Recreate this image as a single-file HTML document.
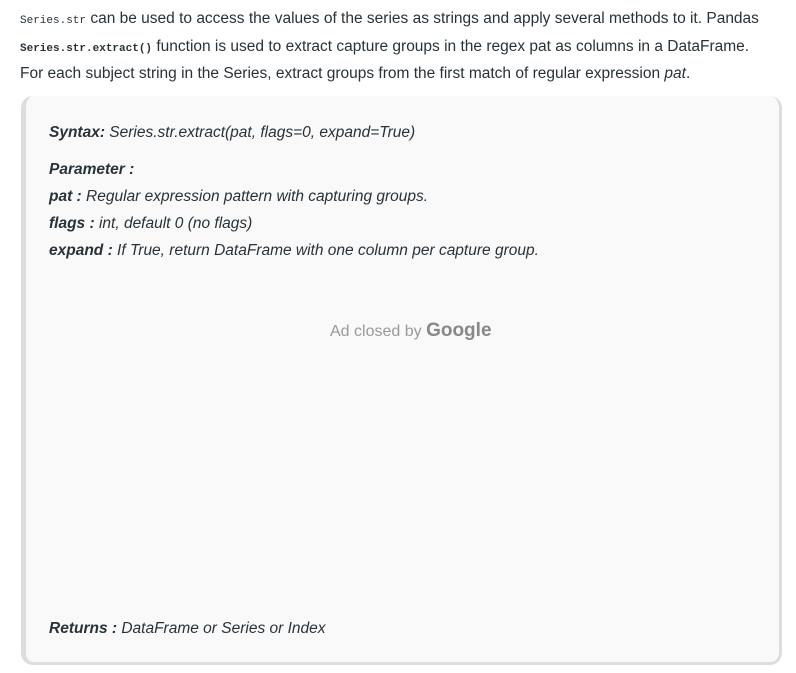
<!DOCTYPE html>
<html><head><style>
body{margin:0;background:#fff;font-family:"Liberation Sans",sans-serif;color:#273239;}
p.intro{position:absolute;left:20px;top:5px;width:776px;margin:0;font-size:15.5px;line-height:27.5px;white-space:nowrap;}
code{font-family:"Liberation Mono",monospace;font-size:11px;line-height:1;vertical-align:baseline;}
.box{position:absolute;left:21px;top:96px;width:761px;height:569px;background:#f9f9f9;border-left:5px solid #ddd;border-right:3px solid #ddd;border-bottom:3px solid #ddd;border-radius:12px;box-sizing:border-box;}
.t{position:absolute;left:49px;font-style:italic;font-size:15.5px;color:#273239;white-space:nowrap;}
b{font-weight:bold;}
.ad{position:absolute;left:330px;top:320px;font-size:16px;color:#999;}
.ad span{font-weight:bold;font-size:19px;color:#888;}
</style></head><body>
<p class="intro"><code>Series.str</code> can be used to access the values of the series as strings and apply several methods to it. Pandas<br><code><b>Series.str.extract()</b></code> function is used to extract capture groups in the regex pat as columns in a DataFrame.<br>For each subject string in the Series, extract groups from the first match of regular expression <i>pat</i>.</p>
<div class="box"></div>
<div class="t" style="top:124px"><b>Syntax:</b> Series.str.extract(pat, flags=0, expand=True)</div>
<div class="t" style="top:161px"><b>Parameter :</b></div>
<div class="t" style="top:188px"><b>pat :</b> Regular expression pattern with capturing groups.</div>
<div class="t" style="top:215px"><b>flags :</b> int, default 0 (no flags)</div>
<div class="t" style="top:242px"><b>expand :</b> If True, return DataFrame with one column per capture group.</div>
<div class="ad">Ad closed by <span>Google</span></div>
<div class="t" style="top:620px"><b>Returns :</b> DataFrame or Series or Index</div>
</body></html>
